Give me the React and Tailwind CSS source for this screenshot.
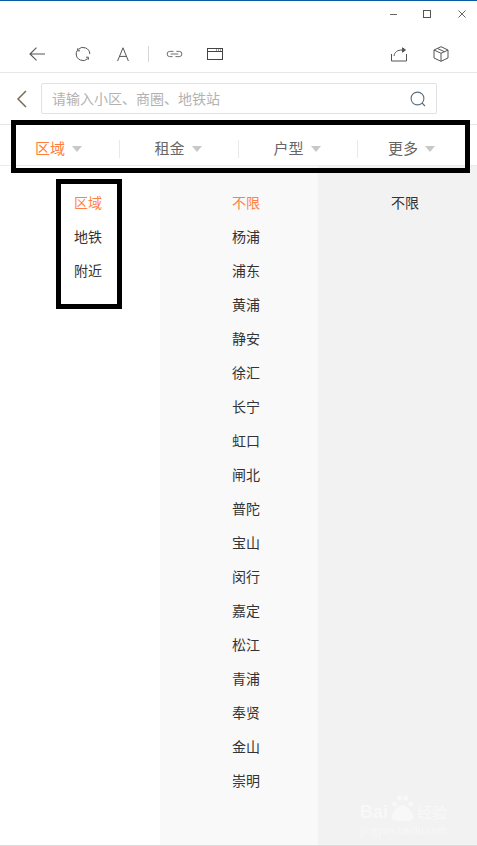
import React from 'react';

const districts = ['不限', '杨浦', '浦东', '黄浦', '静安', '徐汇', '长宁', '虹口', '闸北', '普陀', '宝山', '闵行', '嘉定', '松江', '青浦', '奉贤', '金山', '崇明'];
const filters = ['区域', '租金', '户型', '更多'];

const App = () => {
  return (
    <div className="relative flex h-[846px] w-[477px] flex-col overflow-hidden bg-white font-['Noto_Sans_CJK_SC',sans-serif]">
      {/* Window title bar */}
      <div className="h-[28px] shrink-0 border-t border-[#0a5aa5]">
        <div className="flex h-full items-center justify-end pr-[11px] pb-[1px]">
          <div className="mr-[26px] h-px w-[7px] bg-[#666]" />
          <div className="mr-[27px] h-[8px] w-[8px] border border-[#555]" />
          <svg viewBox="0 0 8 8" className="h-[8px] w-[8px]" stroke="#666" strokeWidth="1">
            <path d="M0.5 0.5 7.5 7.5M7.5 0.5 0.5 7.5" />
          </svg>
        </div>
      </div>

      {/* Browser toolbar */}
      <div className="flex h-[45px] shrink-0 items-center border-b border-[#e6e6e6] pt-[7px]">
        <svg viewBox="0 0 16 14" fill="none" stroke="#555" strokeWidth="1.1" className="ml-[29px] h-[14px] w-[16px]">
          <path d="M16 7H1M7.5 0.7 1 7l6.5 6.3" />
        </svg>
        <svg viewBox="0 0 16 16" fill="none" stroke="#555" strokeWidth="1" className="ml-[30px] h-[16px] w-[16px]">
          <path d="M3.2 3.4A6.8 6.8 0 0 1 14.8 8M12.8 12.6A6.8 6.8 0 0 1 1.2 8 6.8 6.8 0 0 1 2 4.8" />
          <path d="M2.6 2.4V4.8H5M13.4 13.6V11.2H11" />
        </svg>
        <svg viewBox="0 0 12 14" fill="none" stroke="#555" strokeWidth="1" className="ml-[26px] h-[14px] w-[12px]">
          <path d="M0.6 14 6 0.8 11.4 14M2.6 9.4h6.8" />
        </svg>
        <div className="ml-[19px] h-[16px] w-px bg-[#d8d8d8]" />
        <svg viewBox="0 0 18 8" fill="none" stroke="#666" strokeWidth="1" className="ml-[17px] h-[8px] w-[17px]">
          <path d="M8 1.2H4a2.8 2.8 0 0 0 0 5.6h3" />
          <path d="M10 6.8h4a2.8 2.8 0 0 0 0-5.6h-3" />
          <path d="M5 4h8" />
        </svg>
        <svg viewBox="0 0 16 12" fill="none" stroke="#444" strokeWidth="1" className="ml-[24px] h-[12px] w-[16px]">
          <rect x="0.5" y="0.5" width="15" height="11" />
          <path d="M0.5 3.5h15M9 2h1M11 2h1M13 2h1" />
        </svg>
        <div className="flex-1" />
        <svg viewBox="0 0 16 16" fill="none" stroke="#555" strokeWidth="1" className="mr-[26px] h-[16px] w-[16px]">
          <path d="M0.5 8V15H15.5V8" />
          <path d="M3 10C3.5 6 6.5 4 11 4" />
          <path d="M11.5 1.8 14.5 4 11.5 6.2Z" fill="#555" />
        </svg>
        <svg viewBox="0 0 16 16" fill="none" stroke="#555" strokeWidth="1" className="mr-[28px] h-[16px] w-[16px]">
          <path d="M8 0.7 15 4V12L8 15.3 1 12V4Z" />
          <path d="M1 4 8 7.3 15 4M8 7.3V15.3" />
          <path d="M4.5 2.5 11.5 5.7" />
        </svg>
      </div>

      {/* Search row */}
      <div className="flex h-[52px] shrink-0 items-center border-b border-[#e6e6e6]">
        <svg viewBox="0 0 12 18" fill="none" stroke="#7a6a58" strokeWidth="1.5" className="ml-[16px] h-[18px] w-[12px]">
          <path d="M10 1 2 9l8 8" />
        </svg>
        <div className="ml-[13px] flex h-[31px] w-[396px] items-center justify-between rounded-[2px] border border-[#e2e2e2] pr-[10px] pl-[10px]">
          <span className="pb-[2px] text-[14px] leading-none text-[#b2b2b2]">请输入小区、商圈、地铁站</span>
          <svg viewBox="0 0 16 16" fill="none" stroke="#5f6f7a" strokeWidth="1.1" className="h-[16px] w-[16px]">
            <circle cx="7.5" cy="7.5" r="6.4" />
            <path d="M12 12l3 3" />
          </svg>
        </div>
      </div>

      {/* Filter tabs */}
      <div className="grid h-[41px] shrink-0 grid-cols-[120px_119px_119px_1fr] items-center border-b border-[#ececec] pt-[7px]">
        {filters.map((label, i) => (
          <div key={label} className={`flex h-[18px] items-center justify-center gap-[7px] ${i < 3 ? 'border-r border-[#e8e8e8] pr-[2px]' : 'pr-[12px]'}`}>
            <span className={`pb-[2px] text-[15px] leading-none ${i === 0 ? 'text-[#ff7d3b]' : 'text-[#666]'}`}>{label}</span>
            <span className="h-0 w-0 border-x-[5px] border-t-[6px] border-x-transparent border-t-[#c8c8c8]" />
          </div>
        ))}
      </div>

      {/* Three-level picker */}
      <div className="flex min-h-0 flex-1 border-b border-[#dcdcdc]">
        <div className="w-[160px] shrink-0 bg-white pt-[19px] pl-[16px] text-center text-[14px] text-[#333]">
          {['区域', '地铁', '附近'].map((name, i) => (
            <div key={name} className={`h-[34px] leading-[34px] ${i === 0 ? 'text-[#ff8147]' : ''}`}>{name}</div>
          ))}
        </div>
        <div className="w-[158px] shrink-0 bg-[#f9f9f9] pt-[19px] pl-[14px] text-center text-[14px] text-[#333]">
          {districts.map((name, i) => (
            <div key={name} className={`h-[34px] leading-[34px] ${i === 0 ? 'text-[#ff8147]' : ''}`}>{name}</div>
          ))}
        </div>
        <div className="flex-1 bg-[#f2f2f2] pt-[19px] pl-[15px] text-center text-[14px] text-[#333]">
          <div className="h-[34px] leading-[34px]">不限</div>
        </div>
      </div>

      {/* Annotation boxes drawn over the screenshot */}
      <div className="absolute top-[120px] left-[11px] h-[53px] w-[459px] border-[5px] border-black" />
      <div className="absolute top-[179px] left-[56px] h-[130px] w-[66px] border-[5px] border-black" />

      {/* Watermark */}
      <div className="absolute top-[793px] left-[360px] flex w-[87px] flex-col items-center text-[#f8f8f8]">
        <div className="flex h-[29px] items-end whitespace-nowrap">
          <span className="font-['Liberation_Sans',sans-serif] text-[18px] leading-[20px] font-bold">Bai</span>
          <svg viewBox="0 0 24 28" className="h-[28px] w-[27px] shrink-0" fill="#f8f8f8">
            <circle cx="5" cy="10" r="2.4" />
            <circle cx="10" cy="4" r="2.6" />
            <circle cx="16" cy="4" r="2.6" />
            <circle cx="21" cy="10" r="2.4" />
            <path d="M13 11c-4 0-11 7-11 12 0 3 4 4 11 4s11-1 11-4c0-5-7-12-11-12Z" />
          </svg>
          <span className="ml-[2px] text-[15px] leading-[20px]">经验</span>
        </div>
        <span className="mt-[3px] text-[10px] leading-[10px] whitespace-nowrap">jingyan.baidu.com</span>
      </div>
    </div>
  );
};

export default App;
